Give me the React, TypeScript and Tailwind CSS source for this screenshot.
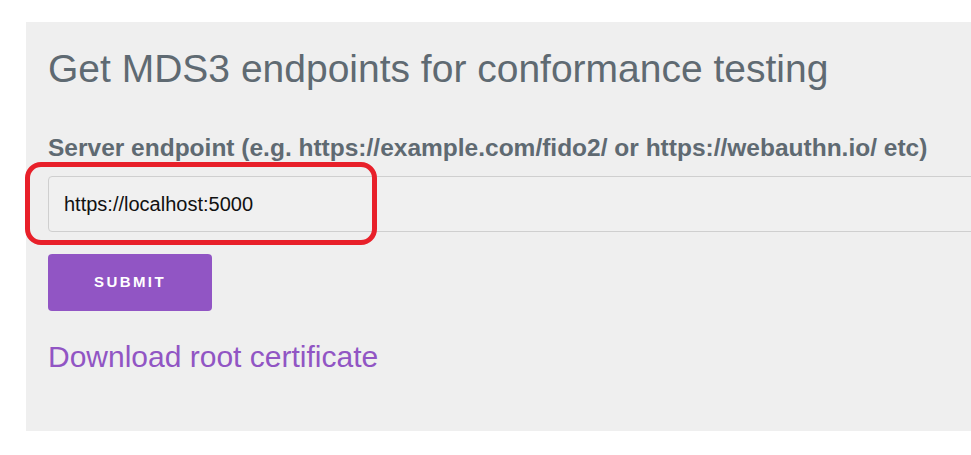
import React, { useState } from "react";

const App = () => {
  const [endpoint, setEndpoint] = useState("https://localhost:5000");

  return (
    <div className="w-full h-[455px] overflow-hidden bg-white font-[family-name:'Liberation_Sans',Arial,sans-serif]">
      <div className="mt-[22px] ml-[26px] w-[1100px] h-[409px] bg-[#efefef] pl-[22px] pr-[22px] pt-[24px]">
        <h1 className="text-[39px] leading-[45px] text-[#5f6a72] font-normal">
          Get MDS3 endpoints for conformance testing
        </h1>
        <label className="block mt-[43px] text-[24.5px] leading-[28px] font-bold text-[#5f6a72]">
          Server endpoint (e.g. https://example.com/fido2/ or https://webauthn.io/ etc)
        </label>
        <div className="relative mt-[14px]">
          <input
            className="w-full h-[56px] px-[15px] bg-[#f0f0f0] border border-[#cfcfcf] rounded-[4px] text-[20px] text-[#111] outline-none"
            value={endpoint}
            onChange={(e) => setEndpoint(e.target.value)}
          />
          {/* red highlight drawn over the screenshot */}
          <div className="absolute left-[-23px] top-[-14px] w-[352px] h-[83px] border-[5px] border-[#e8202a] rounded-[16px] pointer-events-none" />
        </div>
        <button className="mt-[22px] w-[164px] h-[57px] rounded-[4px] bg-[#9155c4] text-white text-[15px] font-bold tracking-[2.4px]">
          SUBMIT
        </button>
        <div className="mt-[28px] text-[30px] leading-[36px]">
          <a href="#" className="text-[#9155c4]">
            Download root certificate
          </a>
        </div>
      </div>
    </div>
  );
};

export default App;
